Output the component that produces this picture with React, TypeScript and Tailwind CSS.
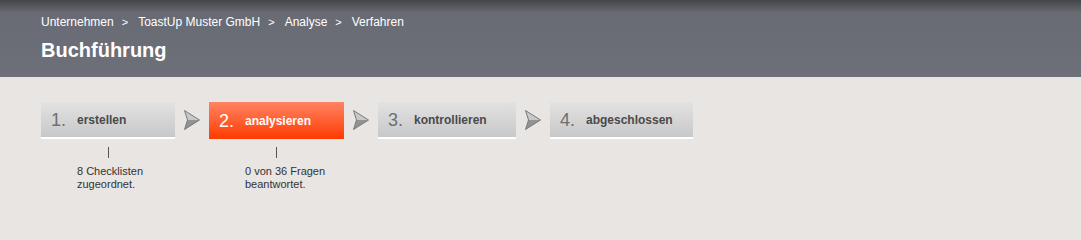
import React from 'react';

const steps = [
  { nr: '1.', label: 'erstellen', width: 'w-[134px]', active: false, note: ['8 Checklisten', 'zugeordnet.'] },
  { nr: '2.', label: 'analysieren', width: 'w-[135px]', active: true, note: ['0 von 36 Fragen', 'beantwortet.'] },
  { nr: '3.', label: 'kontrollieren', width: 'w-[138px]', active: false, note: null },
  { nr: '4.', label: 'abgeschlossen', width: 'w-[143px]', active: false, note: null },
];

const crumbs = ['Unternehmen', 'ToastUp Muster GmbH', 'Analyse', 'Verfahren'];

const Arrow = () => (
  <svg width="16" height="20" viewBox="0 0 16 20" className="mx-[9px] mt-[8px] shrink-0">
    <polygon points="0.5,0.5 15.5,10 3.5,10" fill="#c8c8c8" />
    <polygon points="3.5,10 15.5,10 0.5,19.5" fill="#929292" />
    <polygon points="0.5,0.5 15.5,10 0.5,19.5 3.5,10" fill="none" stroke="#7a7a7a" strokeWidth="1" strokeLinejoin="round" />
  </svg>
);

export default function App() {
  return (
    <div className="min-h-screen bg-[#e8e5e3] font-['Liberation_Sans',Arial,sans-serif]">
      {/* Header */}
      <div className="h-[77px] bg-[linear-gradient(to_bottom,#45464b_0px,#686b73_13px,#6d7079_100%)] pl-[41px] pt-[14px]">
        <div className="flex items-center text-[12px] leading-[16px] text-white">
          {crumbs.map((c, i) => (
            <React.Fragment key={i}>
              {i > 0 && <span className="pl-[8px] pr-[10px] text-[11px]">&gt;</span>}
              <span>{c}</span>
            </React.Fragment>
          ))}
        </div>
        <h1 className="mt-[8px] text-[20px] font-bold leading-[24px] text-white">Buchführung</h1>
      </div>

      {/* Steps */}
      <div className="flex items-start pl-[41px] pt-[25px]">
        {steps.map((s, i) => (
          <React.Fragment key={i}>
            {i > 0 && <Arrow />}
            <div className={`${s.width} shrink-0`}>
              <div
                className={
                  s.active
                    ? 'flex h-[37px] items-center bg-[linear-gradient(to_bottom,#ff8464,#ff3a00)]'
                    : 'flex h-[37px] items-center border-b-2 border-white bg-[linear-gradient(to_bottom,#e3e2e2,#c8c8c8)]'
                }
              >
                <span className={`w-[36px] pl-[10px] text-[18px] leading-none ${s.active ? 'text-white' : 'text-[#6f6f6f]'}`}>
                  {s.nr}
                </span>
                <span className={`text-[12px] font-bold ${s.active ? 'text-white' : 'text-[#4a4a4a]'}`}>{s.label}</span>
              </div>
              {s.note && (
                <div>
                  <div className="mx-auto mt-[8px] h-[11px] w-px bg-[#555]" />
                  <div className="mt-[7px] pl-[36px] text-[11px] leading-[13px] text-[#333]">
                    {s.note[0]}
                    <br />
                    {s.note[1]}
                  </div>
                </div>
              )}
            </div>
          </React.Fragment>
        ))}
      </div>
    </div>
  );
}
